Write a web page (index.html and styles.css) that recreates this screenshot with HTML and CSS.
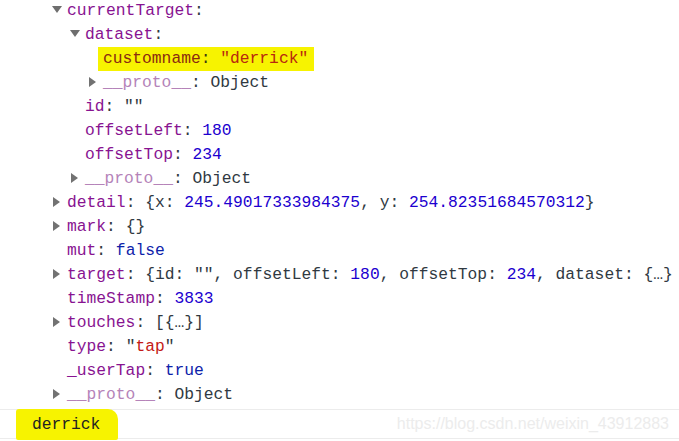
FILE: index.html
```html
<!DOCTYPE html>
<html>
<head>
<meta charset="utf-8">
<link rel="stylesheet" href="styles.css">
</head>
<body>
<div class="console">
  <div class="tree">
    <div class="row l0"><span class="tw down"></span><span class="k">currentTarget</span><span class="p">:</span></div>
    <div class="row l1"><span class="tw down"></span><span class="k">dataset</span><span class="p">:</span></div>
    <div class="row l2"><span class="hl"><span class="k2">customname</span><span class="p">: </span><span class="s">"derrick"</span></span></div>
    <div class="row l2"><span class="tw right"></span><span class="pr">__proto__</span><span class="p">: Object</span></div>
    <div class="row l1"><span class="k">id</span><span class="p">: </span><span class="p">""</span></div>
    <div class="row l1"><span class="k">offsetLeft</span><span class="p">: </span><span class="n">180</span></div>
    <div class="row l1"><span class="k">offsetTop</span><span class="p">: </span><span class="n">234</span></div>
    <div class="row l1"><span class="tw right"></span><span class="pr">__proto__</span><span class="p">: Object</span></div>
    <div class="row l0"><span class="tw right"></span><span class="k">detail</span><span class="p">: {x: </span><span class="n">245.49017333984375</span><span class="p">, y: </span><span class="n">254.82351684570312</span><span class="p">}</span></div>
    <div class="row l0"><span class="tw right"></span><span class="k">mark</span><span class="p">: {}</span></div>
    <div class="row l0"><span class="k">mut</span><span class="p">: </span><span class="b">false</span></div>
    <div class="row l0"><span class="tw right"></span><span class="k">target</span><span class="p">: {id: "", offsetLeft: </span><span class="n">180</span><span class="p">, offsetTop: </span><span class="n">234</span><span class="p">, dataset: {…}</span></div>
    <div class="row l0"><span class="k">timeStamp</span><span class="p">: </span><span class="n">3833</span></div>
    <div class="row l0"><span class="tw right"></span><span class="k">touches</span><span class="p">: [{…}]</span></div>
    <div class="row l0"><span class="k">type</span><span class="p">: </span><span class="p">"</span><span class="s">tap</span><span class="p">"</span></div>
    <div class="row l0"><span class="k">_userTap</span><span class="p">: </span><span class="b">true</span></div>
    <div class="row l0"><span class="tw right"></span><span class="pr">__proto__</span><span class="p">: Object</span></div>
  </div>
  <div class="log">
    <span class="hl2">derrick</span>
    <span class="wm">https://blog.csdn.net/weixin_43912883</span>
  </div>
</div>
</body>
</html>
```

FILE: styles.css
```css
html, body {
  margin: 0;
  padding: 0;
  background: #ffffff;
}
.console {
  width: 679px;
  height: 441px;
  overflow: hidden;
  font-family: "Liberation Mono", "DejaVu Sans Mono", monospace;
  font-size: 16.3px;
  color: #303942;
}
.tree {
  margin-top: -1px;
  height: 410px;
}
.row {
  height: 24px;
  line-height: 24px;
  white-space: nowrap;
  overflow: hidden;
  position: relative;
}
.l0 { padding-left: 67px; }
.l1 { padding-left: 85px; }
.l2 { padding-left: 103px; }
.tw {
  display: inline-block;
  width: 0;
  height: 0;
  vertical-align: middle;
}
.tw.down {
  margin-left: -15px;
  margin-right: 5px;
  border-left: 5px solid transparent;
  border-right: 5px solid transparent;
  border-top: 7px solid #6e6e6e;
  position: relative;
  top: -1px;
}
.tw.right {
  margin-left: -14px;
  margin-right: 7px;
  border-top: 5px solid transparent;
  border-bottom: 5px solid transparent;
  border-left: 7px solid #727272;
  position: relative;
  top: -1px;
}
.k { color: #881391; }
.k2 { color: #8a2a10; }
.pr { color: #b583b9; }
.p { color: #303942; }
.n { color: #1c00cf; }
.b { color: #0d22aa; }
.s { color: #c41a16; }
.hl {
  background: #f7f300;
  margin-left: -5px;
  padding: 4px 6px 5px 5px;
  border-radius: 2px;
}
.hl .s { color: #b8280e; }
.hl .p { color: #3a3a10; }
.log {
  border-top: 1px solid #ececec;
  border-bottom: 1px solid #ececec;
  height: 28px;
  display: flex;
  align-items: center;
  justify-content: space-between;
}
.hl2 {
  background: #f7f300;
  color: #222222;
  margin-left: 16px;
  padding: 6px 18px 6px 16px;
  border-radius: 3px 10px 2px 2px;
}
.wm {
  font-family: "Liberation Sans", Arial, sans-serif;
  font-size: 16px;
  color: #ececec;
  margin-right: 10px;
}
```
